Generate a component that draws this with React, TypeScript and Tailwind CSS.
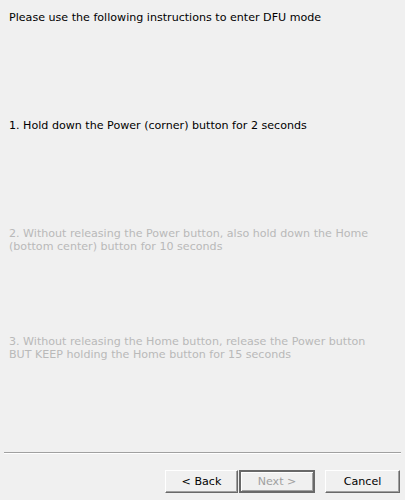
export default function App() {
  const font = { fontFamily: '"DejaVu Sans", Verdana, sans-serif' };
  return (
    <main
      className="flex h-[500px] w-[405px] flex-col bg-[#f0f0f0] text-[11.1px] leading-[13px] text-black"
      style={font}
    >
      <div className="px-[9px] pt-[11px]">
        <p className="h-[108px]">Please use the following instructions to enter DFU mode</p>
        <p className="h-[108px]">1. Hold down the Power (corner) button for 2 seconds</p>
        <p className="h-[108px] text-[#b9b9b9]">
          2. Without releasing the Power button, also hold down the Home
          <br />
          (bottom center) button for 10 seconds
        </p>
        <p className="text-[#b9b9b9]">
          3. Without releasing the Home button, release the Power button
          <br />
          BUT KEEP holding the Home button for 15 seconds
        </p>
      </div>

      <div className="mx-[4px] mt-auto border-t border-b border-t-[#a0a0a0] border-b-white" />

      <div className="flex justify-end pt-[16px] pr-[5px] pb-[7px]">
        <button className="h-[23px] w-[73px] border border-t-white border-l-white border-r-[#696969] border-b-[#696969] bg-[#f0f0f0] shadow-[inset_-1px_-1px_#a0a0a0]">
          &lt; Back
        </button>
        <button
          disabled
          className="ml-[1px] h-[23px] w-[76px] border-2 border-[#696969] bg-[#f0f0f0] text-[#a0a0a0] shadow-[inset_1px_1px_white,inset_-1px_-1px_#a0a0a0]"
        >
          Next &gt;
        </button>
        <button className="ml-[10px] h-[23px] w-[75px] border border-t-white border-l-white border-r-[#696969] border-b-[#696969] bg-[#f0f0f0] shadow-[inset_-1px_-1px_#a0a0a0]">
          Cancel
        </button>
      </div>
    </main>
  );
}
